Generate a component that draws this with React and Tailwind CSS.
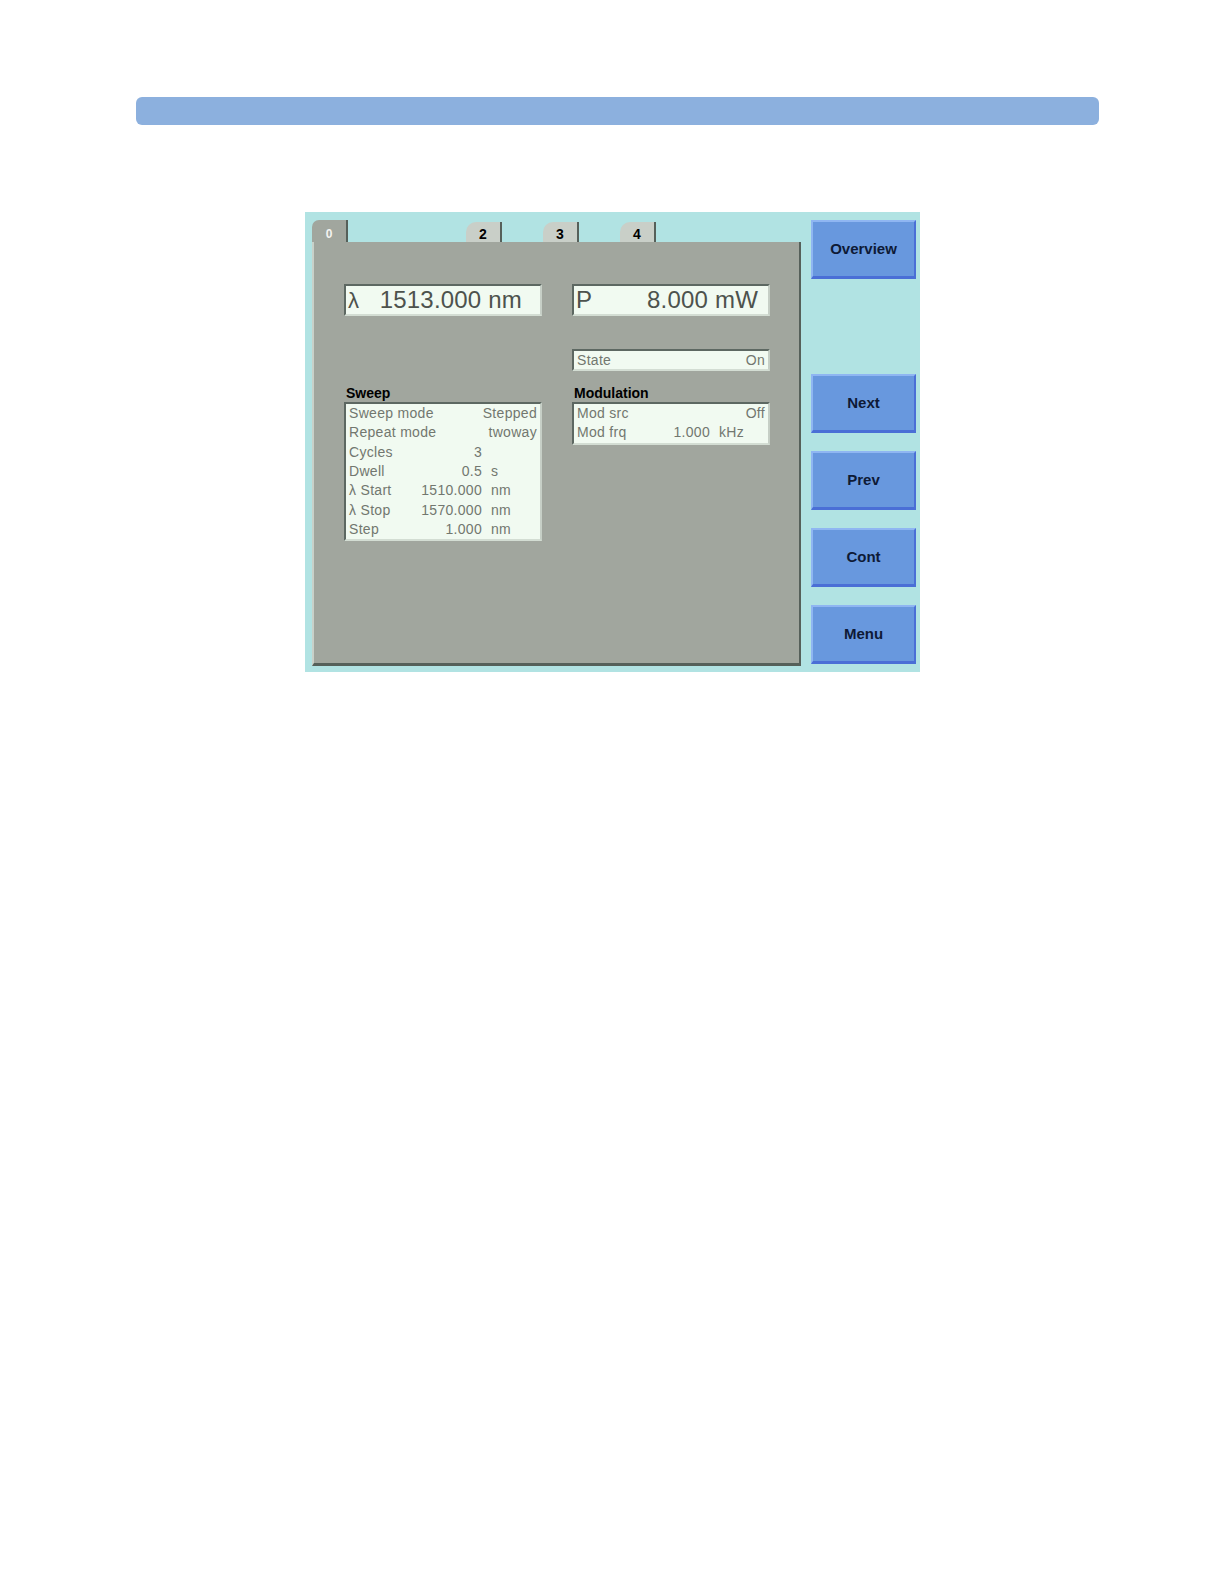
import React from 'react';

const sweepRows = [
  { label: 'Sweep mode', value: 'Stepped' },
  { label: 'Repeat mode', value: 'twoway' },
  { label: 'Cycles', value: '3', unit: '' },
  { label: 'Dwell', value: '0.5', unit: 's' },
  { label: 'λ Start', value: '1510.000', unit: 'nm' },
  { label: 'λ Stop', value: '1570.000', unit: 'nm' },
  { label: 'Step', value: '1.000', unit: 'nm' },
];

const modRows = [
  { label: 'Mod src', value: 'Off' },
  { label: 'Mod frq', value: '1.000', unit: 'kHz' },
];

const buttons = ['Overview', null, 'Next', 'Prev', 'Cont', 'Menu'];

const lcdBox = 'bg-[#f1faf1] border-t-2 border-l-2 border-b-2 border-r-2 border-t-[#5d6862] border-l-[#5d6862] border-b-[#d3ddd3] border-r-[#c6cfc6]';

// one line in the small lcd tables
const Row = ({ label, value, unit }) => (
  <div className="flex h-[19.3px] items-center px-[3px] text-[14px] tracking-[0.3px] text-[#72776f] whitespace-nowrap">
    <span className="flex-1">{label}</span>
    <span className="text-right">{value}</span>
    {unit !== undefined && <span className="w-[55px] pl-[9px]">{unit}</span>}
  </div>
);

const Tab = ({ label, active }) =>
  active ? (
    <div className="h-[22px] w-[36px] bg-[#a1a69e] rounded-tl-[7px] border-r-2 border-[#56605a] flex items-end justify-center pb-[2px] text-[12px] font-bold leading-[12px] text-[#f4f4f0]">
      {label}
    </div>
  ) : (
    <div className="h-[20px] w-[36px] bg-[#c9cfc8] rounded-tl-[10px] border-r-2 border-[#56605a] flex items-end justify-center pb-[1px] text-[14px] font-bold leading-[14px] text-black">
      {label}
    </div>
  );

export default function App() {
  return (
    <div className="min-h-[1582px] w-[1222px] bg-white pt-[97px] font-['Liberation_Sans',Arial,sans-serif]">
      {/* header bar */}
      <div className="ml-[136px] h-[28px] w-[963px] rounded-[6px] bg-[#8cb0de]" />

      {/* instrument screen */}
      <div className="ml-[305px] mt-[87px] flex h-[460px] w-[615px] bg-[#b1e3e3] pl-[7px] pt-[8px]">
        <div className="flex w-[489px] flex-col">
          {/* tabs */}
          <div className="grid h-[22px] grid-cols-[repeat(5,77px)] items-end">
            <Tab label="0" active />
            <div />
            <Tab label="2" />
            <Tab label="3" />
            <Tab label="4" />
          </div>

          {/* panel */}
          <div className="h-[424px] bg-[#a1a69e] border-l-2 border-l-[#c9d1c9] border-r-2 border-r-[#56605a] border-b-[3px] border-b-[#56605a] pl-[30px] pt-[42px]">
            <div className="grid grid-cols-[198px_198px] gap-x-[30px]">
              {/* big readouts */}
              <div className={`${lcdBox} flex h-[32px] items-center pl-[2px] pr-[18px] text-[24px] text-[#4d524d] tracking-[0.2px]`}>
                <span className="text-[22px]">λ</span>
                <span className="ml-auto">1513.000 nm</span>
              </div>
              <div className={`${lcdBox} flex h-[32px] items-center pl-[2px] pr-[10px] text-[24px] text-[#4d524d] tracking-[0.2px]`}>
                <span>P</span>
                <span className="ml-auto">8.000 mW</span>
              </div>

              {/* state */}
              <div />
              <div className={`${lcdBox} mt-[33px] flex h-[22px] items-center px-[3px] text-[14px] tracking-[0.3px] text-[#72776f]`}>
                <span className="flex-1">State</span>
                <span>On</span>
              </div>

              {/* sweep */}
              <div className="mt-[14px]">
                <div className="h-[17px] pl-[2px] text-[14px] font-bold leading-[17px] text-black">Sweep</div>
                <div className={lcdBox}>
                  {sweepRows.map((r) => (
                    <Row key={r.label} {...r} />
                  ))}
                </div>
              </div>

              {/* modulation */}
              <div className="mt-[14px]">
                <div className="h-[17px] pl-[2px] text-[14px] font-bold leading-[17px] text-black">Modulation</div>
                <div className={lcdBox}>
                  {modRows.map((r) => (
                    <Row key={r.label} {...r} />
                  ))}
                </div>
              </div>
            </div>
          </div>
        </div>

        {/* softkeys */}
        <div className="ml-[10px] flex w-[105px] flex-col gap-[18px]">
          {buttons.map((b, i) =>
            b ? (
              <div
                key={b}
                className="flex h-[59px] items-center justify-center bg-[#6898de] border-t-2 border-l-2 border-t-[#8fb6f2] border-l-[#8fb6f2] border-b-[3px] border-r-2 border-b-[#4a6fd6] border-r-[#4a6fd6] text-[15px] font-bold text-[#0e1a36]"
              >
                {b}
              </div>
            ) : (
              <div key={i} className="h-[59px]" />
            )
          )}
        </div>
      </div>
    </div>
  );
}
